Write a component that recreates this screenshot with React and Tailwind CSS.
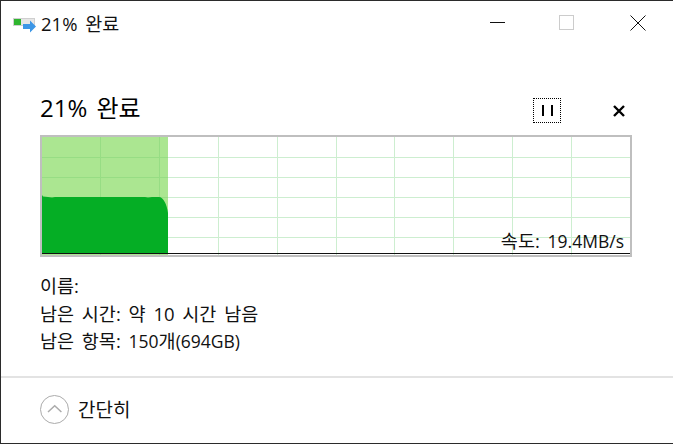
import React from "react";

const font = { fontFamily: '"Open Sans","Noto Sans CJK KR",sans-serif' };

function Chart() {
  const xs = [100, 159, 218, 277, 336, 394, 453, 512, 571];
  const ys = [157, 177, 197, 217, 237];
  return (
    <svg width="592" height="122" viewBox="40 135 592 122" className="block">
      <rect x="42" y="137" width="588" height="119" fill="#fff" />
      <path d="M42 137H168V256H42Z" fill="#abe691" />
      {xs.map((x) => (
        <rect key={x} x={x} y="137" width="1" height="119" fill={x < 168 ? "#97dd84" : "#cdeed0"} />
      ))}
      {ys.map((y) => (
        <g key={y}>
          <rect x="42" y={y} width="126" height="1" fill="#97dd84" />
          <rect x="168" y={y} width="462" height="1" fill="#cdeed0" />
        </g>
      ))}
      <path
        d="M42 195L43 196.500L48 197L52 197.500L55 197L145 197L148 197.500L152 197L159 197C163 197 167 204 168 213V253H42Z"
        fill="#05ae25"
      />
      <rect x="42" y="253" width="588" height="1" fill="#111" />
      <path d="M41 136H631V256H41Z" fill="none" stroke="#bfbfbf" strokeWidth="2" />
    </svg>
  );
}

function AppIcon() {
  return (
    <svg width="24" height="16" viewBox="0 0 24 16" className="block">
      <rect x="0.500" y="0.500" width="21" height="7" fill="#e6e6e6" stroke="#cfcfcf" />
      <rect x="1" y="1" width="7" height="6" fill="#2fb52f" />
      <path d="M10 6H17V2.500L23 8.500L17 14.500V11H10Z" fill="#3c96e6" />
    </svg>
  );
}

export default function App() {
  return (
    <div
      className="w-[673px] h-[444px] bg-white text-[#111] flex flex-col overflow-hidden border-t border-b border-l border-[#2b2b2b] [word-spacing:3px]"
      style={font}
    >
      <div className="h-[45px] flex items-start shrink-0">
        <div className="ml-[12px] mt-[17px]"><AppIcon /></div>
        <span className="ml-[4px] mt-[9px] text-[18.500px] leading-[28px]">21% 완료</span>
        <div className="ml-auto flex items-start">
          <svg width="16" height="2" className="mt-[21px]"><rect width="15" height="1" fill="#111" /></svg>
          <svg width="16" height="16" className="ml-[53px] mt-[14px]"><rect x="0.500" y="0.500" width="14" height="14" fill="none" stroke="#ccc" /></svg>
          <svg width="16" height="16" className="ml-[55px] mr-[27px] mt-[14px]">
            <path d="M0.500 0.500L15.500 15.500M15.500 0.500L0.500 15.500" stroke="#111" fill="none" />
          </svg>
        </div>
      </div>

      <div className="flex items-start pl-[39px] mt-[46px] h-[43px] shrink-0">
        <span className="text-[24px] leading-[32px] font-normal text-black">21% 완료</span>
        <button className="ml-auto mt-[6px] w-[28px] h-[25px] border border-dotted border-black flex items-center justify-center gap-[7px]">
          <span className="w-[2px] h-[11px] bg-black" />
          <span className="w-[2px] h-[11px] bg-black" />
        </button>
        <svg width="14" height="14" className="ml-[51px] mr-[47px] mt-[12px]" viewBox="0 0 14 14">
          <path d="M2 2L12 12M12 2L2 12" stroke="#000" strokeWidth="2.400" fill="none" />
        </svg>
      </div>

      <div className="relative ml-[39px] w-[592px] h-[122px] shrink-0">
        <Chart />
        <span className="absolute right-[8px] bottom-[2px] text-[18.500px] leading-[28px] whitespace-nowrap">
          속도: <span className="text-[17.500px]">19.4MB/s</span>
        </span>
      </div>

      <div className="ml-[39px] mt-[15px] text-[18.500px] leading-[27.500px] flex flex-col shrink-0">
        <span>이름:</span>
        <span>남은 시간: 약 10 시간 남음</span>
        <span>
          남은 항목: <span className="text-[17.500px]">150</span>개<span className="text-[17.500px]">(694GB)</span>
        </span>
      </div>

      <div className="mt-[20.500px] flex-1 border-t-2 border-[#e3e3e3] flex items-center pl-[39px] pb-[1px]">
        <svg width="30" height="30" viewBox="0 0 30 30" className="block">
          <circle cx="14.500" cy="14.500" r="14" fill="none" stroke="#ababab" />
          <path d="M8 17L14.700 10.700L21.400 17" fill="none" stroke="#ababab" strokeWidth="1.500" />
        </svg>
        <span className="ml-[8px] text-[19px] leading-[28px]">간단히</span>
      </div>
    </div>
  );
}
